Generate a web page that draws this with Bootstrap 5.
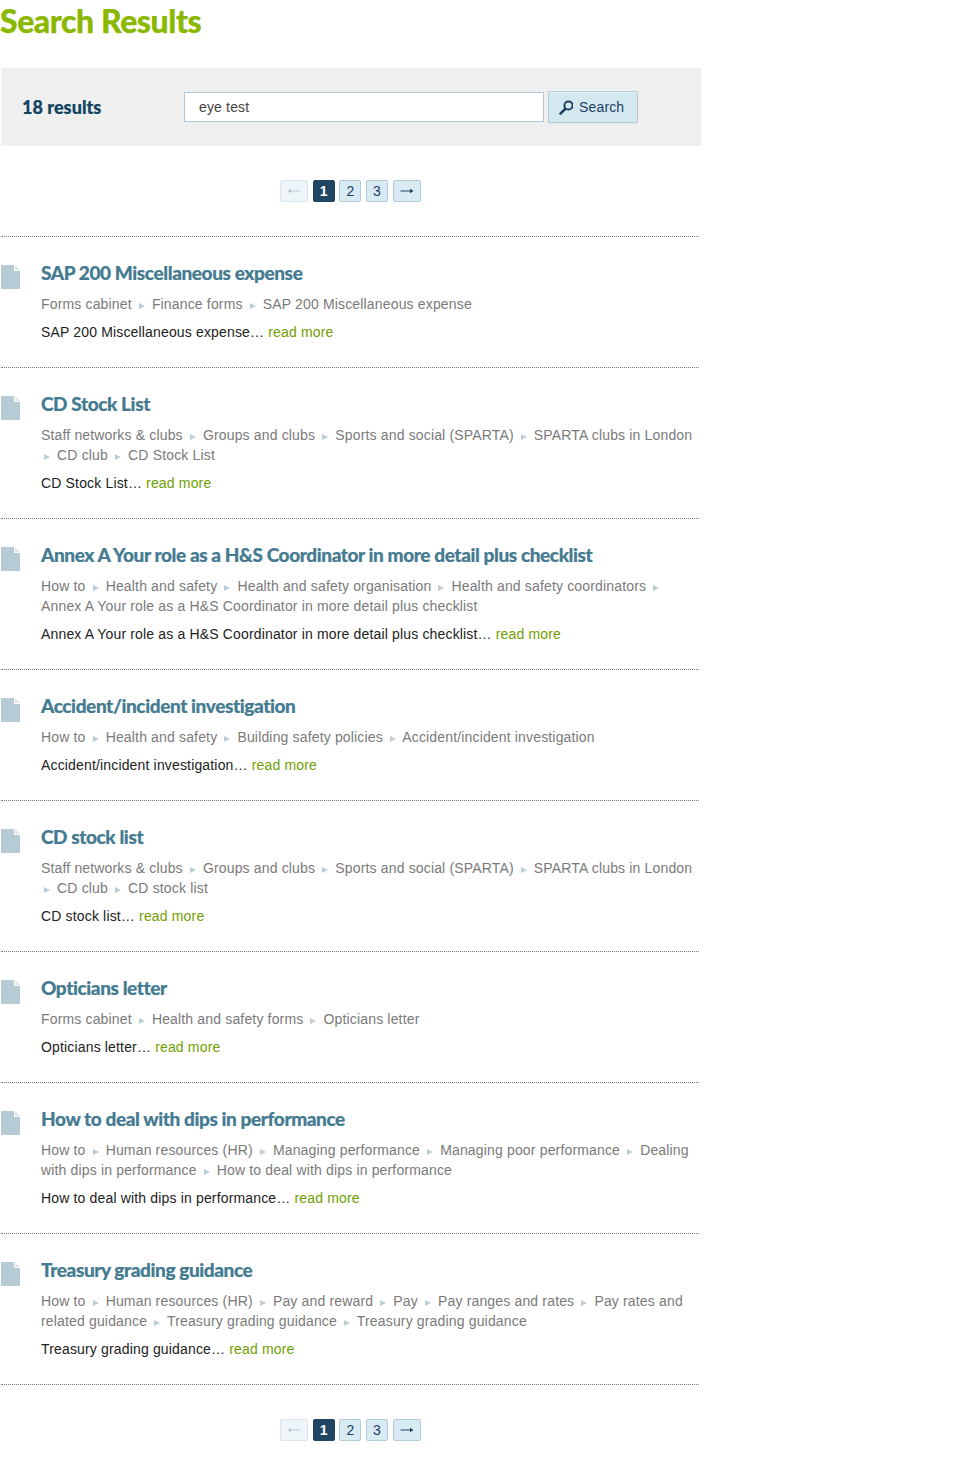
<!DOCTYPE html>
<html lang="en">
<head>
<meta charset="utf-8">
<title>Search Results</title>
<link href="https://cdn.jsdelivr.net/npm/bootstrap@5.3.0/dist/css/bootstrap.min.css" rel="stylesheet">
<style>
body{font-family:"Liberation Sans",Arial,sans-serif;font-size:14px;line-height:20px;color:#222;background:#fff;margin:0;letter-spacing:.16px}
.sr-wrap{width:699px;margin-left:1px}
.sr-title{font-family:Lato,sans-serif;font-weight:900;font-size:32px;line-height:36px;color:#8ab800;margin:3px 0 0 -1px;letter-spacing:-.45px;height:65px;-webkit-text-stroke:.25px #8ab800}
.sr-bar{background:#efefef;height:78px;width:700px;padding-left:21px}
.sr-count{font-family:Lato,sans-serif;font-weight:900;font-size:18px;color:#0f4460;width:162px;letter-spacing:.05px;-webkit-text-stroke:.2px #0f4460}
.sr-input{width:360px;height:30px;border:1px solid #b3c8d4;background:#fff;padding:0 14px;font-size:14px;color:#444;border-radius:0;outline:0;letter-spacing:.16px}
.sr-btn{width:90px;height:32px;margin-left:4px;background:#d4e8f0;border:1px solid #b3cbd7;color:#1e4060;font-size:14px;padding:0 0 0 10px;border-radius:1px;gap:6px;letter-spacing:.16px;box-shadow:inset 0 1px 0 rgba(255,255,255,.35),0 1px 1px rgba(0,0,0,.05)}
.sr-pager{gap:4.7px;height:22px}
.sr-pg{height:22px;width:22px;border:1px solid #b3cbd7;background:#d9ebf2;color:#1e4060;border-radius:2px;font-size:14px;line-height:20px;text-decoration:none;text-align:center}
.sr-pg.sr-arrow{width:28px}
.sr-pg.sr-off{background:#edf5f8;border-color:#dbe7ec;color:#b9c6cd}
.sr-pg.sr-on{background:#1f4562;border-color:#1f4562;color:#fff;font-weight:700}
.sr-top{margin:34px 0;padding-left:279px}
.sr-bottom{margin-top:34px;padding-left:279px}
.sr-item{border-top:1px dotted #777;padding:24px 0 25px 0}
.sr-list{border-bottom:1px dotted #777;width:698px}
.sr-icon{flex:0 0 40px;height:24px;padding-top:4px}
.sr-h{font-family:Lato,sans-serif;font-weight:900;font-size:19px;line-height:24px;color:#457b91;letter-spacing:-.4px;margin:0;text-decoration:none;display:block;-webkit-text-stroke:.2px #457b91}
.sr-crumbs{color:#7a7a7a;margin-top:9px}
.sr-sep{display:inline-block;width:0;height:0;border-left:6px solid #bccdd6;border-top:3.5px solid transparent;border-bottom:3.5px solid transparent;margin:0 3px;vertical-align:.5px}
.sr-desc{margin-top:8px;color:#222}
.sr-desc a{color:#6fa000;text-decoration:none}
</style>
</head>
<body>
<div class="sr-wrap">
<h1 class="sr-title">Search Results</h1>
<form class="sr-bar d-flex align-items-center">
<div class="sr-count">18 results</div>
<input class="sr-input" type="text" value="eye test" aria-label="Search">
<button class="sr-btn d-inline-flex align-items-center" type="button"><svg width="14" height="15" viewBox="0 0 14 15"><circle cx="9.5" cy="5.5" r="4.1" fill="none" stroke="#1e4060" stroke-width="2"/><path d="M6.2 9 L1.5 13.6" stroke="#1e4060" stroke-width="2.6" stroke-linecap="round"/></svg>Search</button>
</form>
<nav class="sr-pager sr-top d-flex align-items-center" aria-label="pages">
<a class="sr-pg sr-arrow sr-off d-flex align-items-center justify-content-center" href="#" aria-label="Previous"><svg width="14" height="6" viewBox="0 0 14 6"><path d="M13.5 3H3" stroke="#b9c6cd" fill="none"/><path d="M.5 3L4 .8V5.2Z" fill="#b9c6cd"/></svg></a><a class="sr-pg sr-on" href="#">1</a><a class="sr-pg" href="#">2</a><a class="sr-pg" href="#">3</a><a class="sr-pg sr-arrow d-flex align-items-center justify-content-center" href="#" aria-label="Next"><svg width="14" height="6" viewBox="0 0 14 6"><path d="M.5 3H11" stroke="#1e4060" fill="none"/><path d="M13.5 3L10 .8V5.2Z" fill="#1e4060"/></svg></a>
</nav>
<div class="sr-list">
<div class="sr-item d-flex"><div class="sr-icon"><svg width="19" height="24" viewBox="0 0 19 24"><path d="M0 0H13V6H19V24H0Z" fill="#b7cbd4"/><path d="M14 0L19 5H14Z" fill="#dce6eb"/></svg></div><div class="flex-grow-1"><a class="sr-h" href="#">SAP 200 Miscellaneous expense</a><div class="sr-crumbs">Forms cabinet <i class="sr-sep"></i> Finance forms <i class="sr-sep"></i> SAP 200 Miscellaneous expense</div><div class="sr-desc">SAP 200 Miscellaneous expense… <a href="#">read more</a></div></div></div>
<div class="sr-item d-flex"><div class="sr-icon"><svg width="19" height="24" viewBox="0 0 19 24"><path d="M0 0H13V6H19V24H0Z" fill="#b7cbd4"/><path d="M14 0L19 5H14Z" fill="#dce6eb"/></svg></div><div class="flex-grow-1"><a class="sr-h" href="#">CD Stock List</a><div class="sr-crumbs">Staff networks &amp; clubs <i class="sr-sep"></i> Groups and clubs <i class="sr-sep"></i> Sports and social (SPARTA) <i class="sr-sep"></i> SPARTA clubs in London <i class="sr-sep"></i> CD club <i class="sr-sep"></i> CD Stock List</div><div class="sr-desc">CD Stock List… <a href="#">read more</a></div></div></div>
<div class="sr-item d-flex"><div class="sr-icon"><svg width="19" height="24" viewBox="0 0 19 24"><path d="M0 0H13V6H19V24H0Z" fill="#b7cbd4"/><path d="M14 0L19 5H14Z" fill="#dce6eb"/></svg></div><div class="flex-grow-1"><a class="sr-h" href="#">Annex A Your role as a H&amp;S Coordinator in more detail plus checklist</a><div class="sr-crumbs">How to <i class="sr-sep"></i> Health and safety <i class="sr-sep"></i> Health and safety organisation <i class="sr-sep"></i> Health and safety coordinators <i class="sr-sep"></i> Annex A Your role as a H&amp;S Coordinator in more detail plus checklist</div><div class="sr-desc">Annex A Your role as a H&amp;S Coordinator in more detail plus checklist… <a href="#">read more</a></div></div></div>
<div class="sr-item d-flex"><div class="sr-icon"><svg width="19" height="24" viewBox="0 0 19 24"><path d="M0 0H13V6H19V24H0Z" fill="#b7cbd4"/><path d="M14 0L19 5H14Z" fill="#dce6eb"/></svg></div><div class="flex-grow-1"><a class="sr-h" href="#">Accident/incident investigation</a><div class="sr-crumbs">How to <i class="sr-sep"></i> Health and safety <i class="sr-sep"></i> Building safety policies <i class="sr-sep"></i> Accident/incident investigation</div><div class="sr-desc">Accident/incident investigation… <a href="#">read more</a></div></div></div>
<div class="sr-item d-flex"><div class="sr-icon"><svg width="19" height="24" viewBox="0 0 19 24"><path d="M0 0H13V6H19V24H0Z" fill="#b7cbd4"/><path d="M14 0L19 5H14Z" fill="#dce6eb"/></svg></div><div class="flex-grow-1"><a class="sr-h" href="#">CD stock list</a><div class="sr-crumbs">Staff networks &amp; clubs <i class="sr-sep"></i> Groups and clubs <i class="sr-sep"></i> Sports and social (SPARTA) <i class="sr-sep"></i> SPARTA clubs in London <i class="sr-sep"></i> CD club <i class="sr-sep"></i> CD stock list</div><div class="sr-desc">CD stock list… <a href="#">read more</a></div></div></div>
<div class="sr-item d-flex"><div class="sr-icon"><svg width="19" height="24" viewBox="0 0 19 24"><path d="M0 0H13V6H19V24H0Z" fill="#b7cbd4"/><path d="M14 0L19 5H14Z" fill="#dce6eb"/></svg></div><div class="flex-grow-1"><a class="sr-h" href="#">Opticians letter</a><div class="sr-crumbs">Forms cabinet <i class="sr-sep"></i> Health and safety forms <i class="sr-sep"></i> Opticians letter</div><div class="sr-desc">Opticians letter… <a href="#">read more</a></div></div></div>
<div class="sr-item d-flex"><div class="sr-icon"><svg width="19" height="24" viewBox="0 0 19 24"><path d="M0 0H13V6H19V24H0Z" fill="#b7cbd4"/><path d="M14 0L19 5H14Z" fill="#dce6eb"/></svg></div><div class="flex-grow-1"><a class="sr-h" href="#">How to deal with dips in performance</a><div class="sr-crumbs">How to <i class="sr-sep"></i> Human resources (HR) <i class="sr-sep"></i> Managing performance <i class="sr-sep"></i> Managing poor performance <i class="sr-sep"></i> Dealing with dips in performance <i class="sr-sep"></i> How to deal with dips in performance</div><div class="sr-desc">How to deal with dips in performance… <a href="#">read more</a></div></div></div>
<div class="sr-item d-flex"><div class="sr-icon"><svg width="19" height="24" viewBox="0 0 19 24"><path d="M0 0H13V6H19V24H0Z" fill="#b7cbd4"/><path d="M14 0L19 5H14Z" fill="#dce6eb"/></svg></div><div class="flex-grow-1"><a class="sr-h" href="#">Treasury grading guidance</a><div class="sr-crumbs">How to <i class="sr-sep"></i> Human resources (HR) <i class="sr-sep"></i> Pay and reward <i class="sr-sep"></i> Pay <i class="sr-sep"></i> Pay ranges and rates <i class="sr-sep"></i> Pay rates and related guidance <i class="sr-sep"></i> Treasury grading guidance <i class="sr-sep"></i> Treasury grading guidance</div><div class="sr-desc">Treasury grading guidance… <a href="#">read more</a></div></div></div>
</div>
<nav class="sr-pager sr-bottom d-flex align-items-center" aria-label="pages">
<a class="sr-pg sr-arrow sr-off d-flex align-items-center justify-content-center" href="#" aria-label="Previous"><svg width="14" height="6" viewBox="0 0 14 6"><path d="M13.5 3H3" stroke="#b9c6cd" fill="none"/><path d="M.5 3L4 .8V5.2Z" fill="#b9c6cd"/></svg></a><a class="sr-pg sr-on" href="#">1</a><a class="sr-pg" href="#">2</a><a class="sr-pg" href="#">3</a><a class="sr-pg sr-arrow d-flex align-items-center justify-content-center" href="#" aria-label="Next"><svg width="14" height="6" viewBox="0 0 14 6"><path d="M.5 3H11" stroke="#1e4060" fill="none"/><path d="M13.5 3L10 .8V5.2Z" fill="#1e4060"/></svg></a>
</nav>
</div>
</body>
</html>
